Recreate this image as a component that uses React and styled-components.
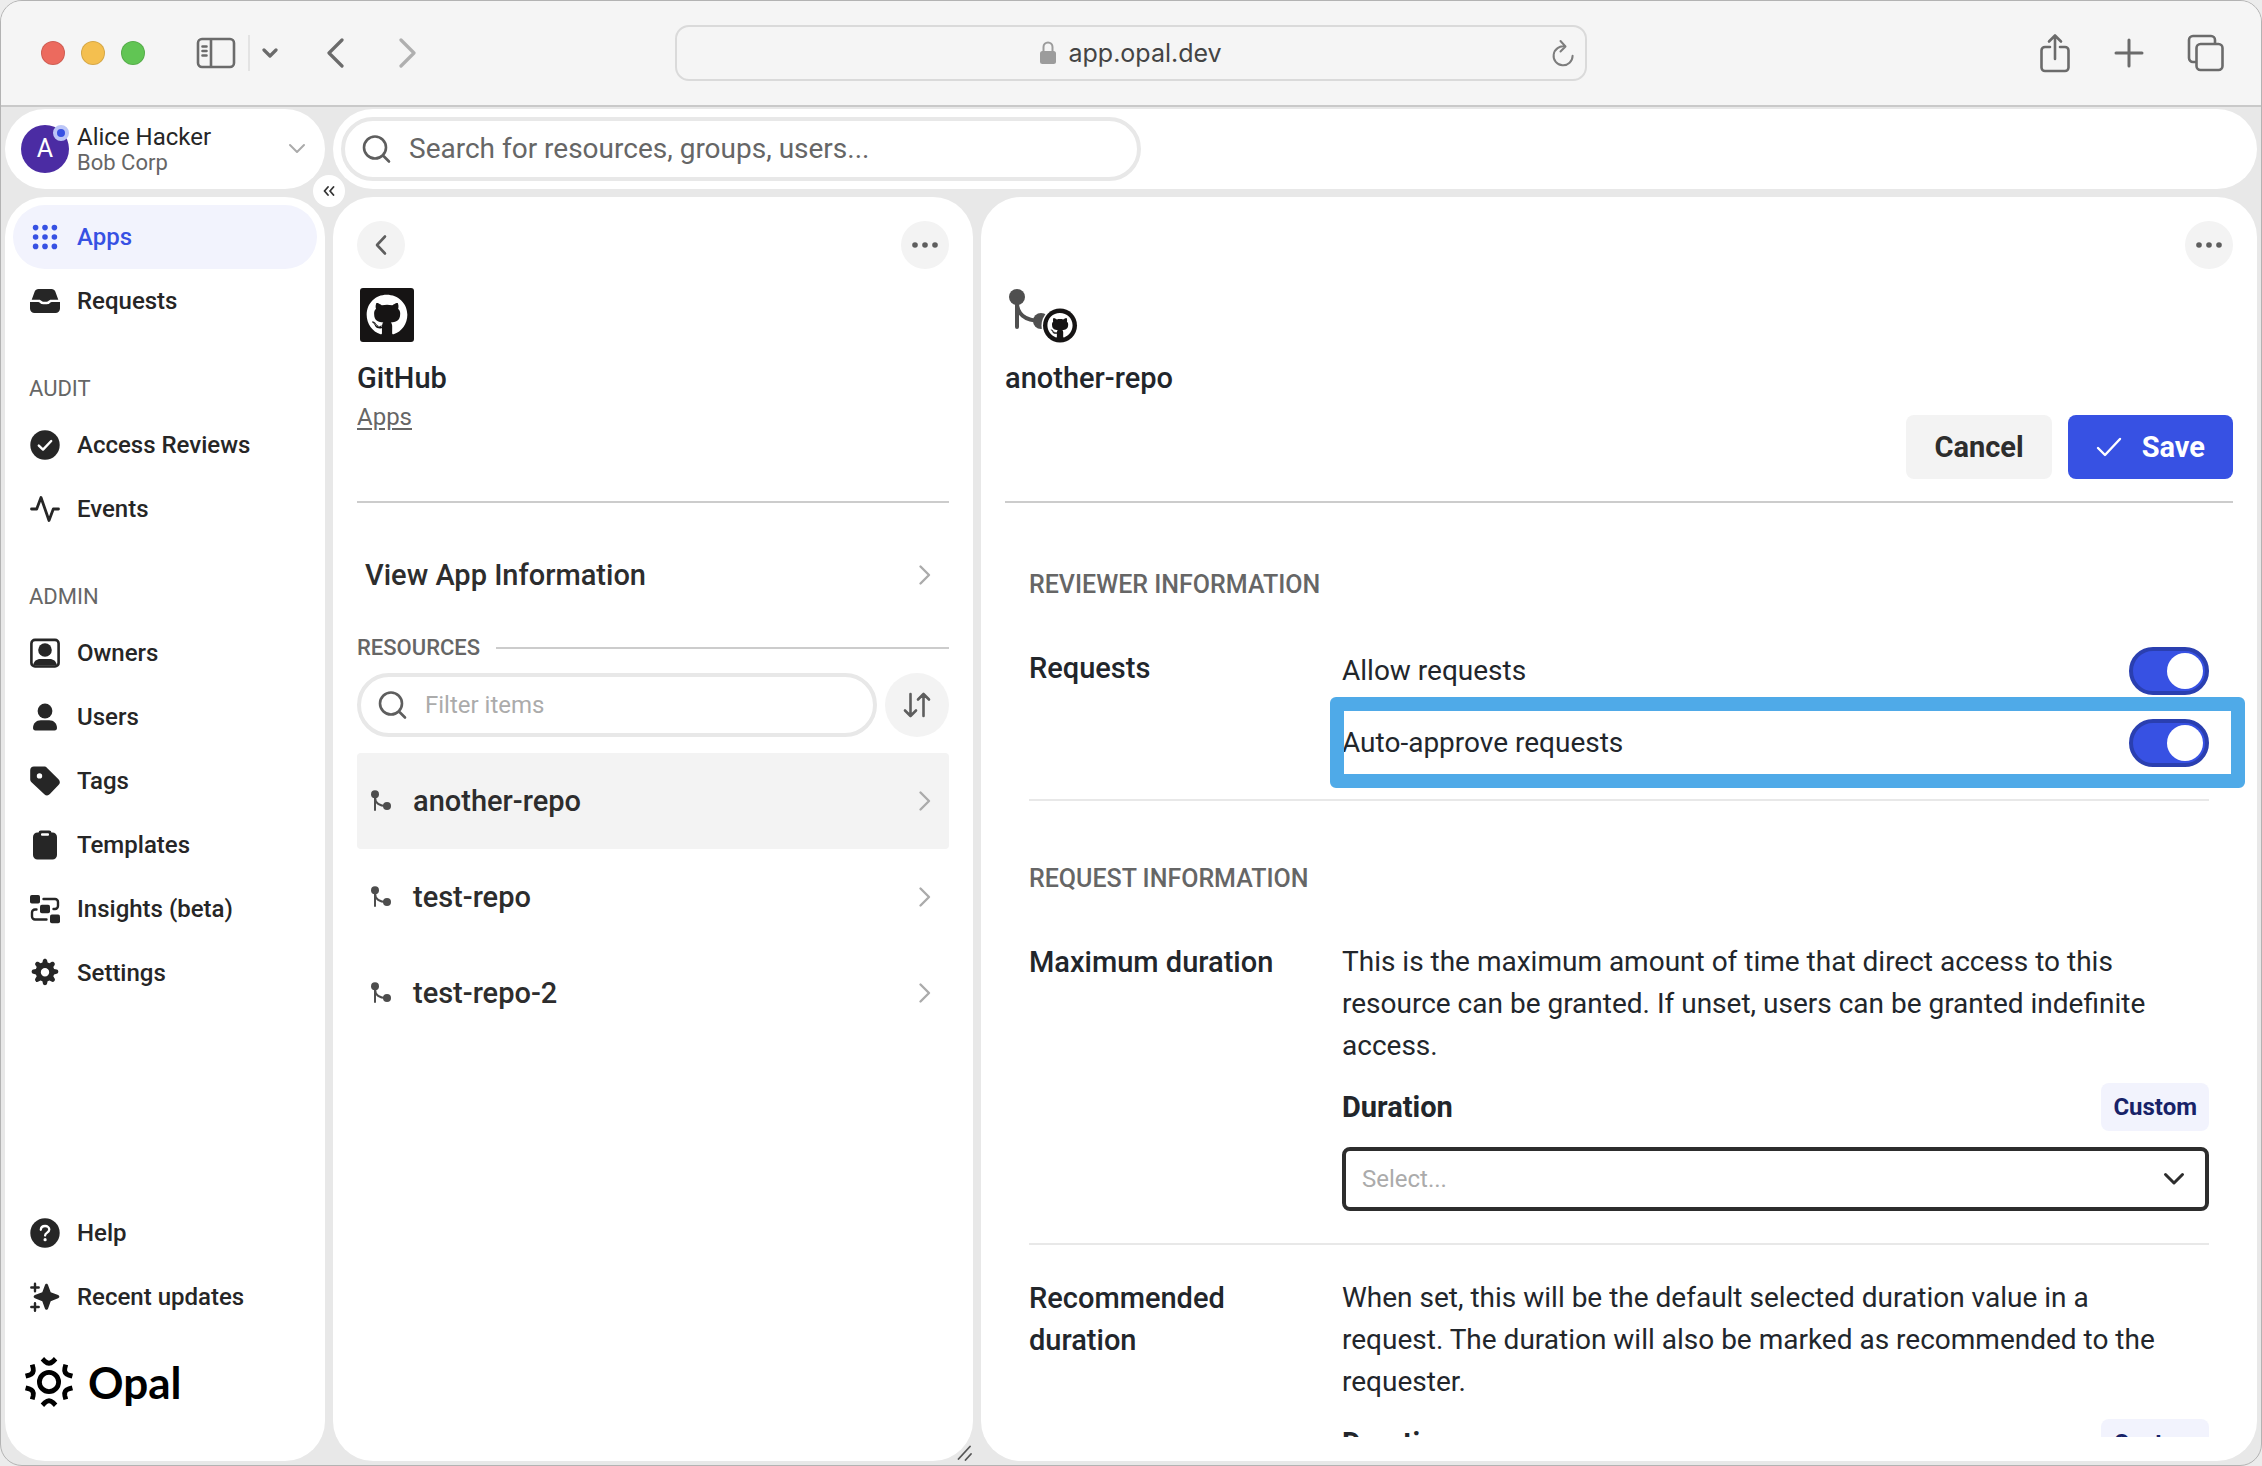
import React from 'react';
import styled, { createGlobalStyle, css } from 'styled-components';
import { FaGithub } from 'react-icons/fa';

const NAV_TOP = [
  { label: 'Apps', icon: 'apps', active: true },
  { label: 'Requests', icon: 'inbox' },
];

const NAV_AUDIT = [
  { label: 'Access Reviews', icon: 'check' },
  { label: 'Events', icon: 'pulse' },
];

const NAV_ADMIN = [
  { label: 'Owners', icon: 'owner' },
  { label: 'Users', icon: 'user' },
  { label: 'Tags', icon: 'tag' },
  { label: 'Templates', icon: 'clipboard' },
  { label: 'Insights (beta)', icon: 'insights' },
  { label: 'Settings', icon: 'gear' },
];

const NAV_BOTTOM = [
  { label: 'Help', icon: 'help' },
  { label: 'Recent updates', icon: 'sparkle' },
];

const REPOS = ['another-repo', 'test-repo', 'test-repo-2'];

const navIcons = {
  apps: [5.6, 15, 24.4].map((y) =>
    [5.6, 15, 24.4].map((x) => <circle key={`${x}-${y}`} cx={x} cy={y} r="2.8" />)
  ),
  inbox: (
    <>
      <path d="M8.5 3h13c1.8 0 3.2 1 3.8 2.6l3 8.2H21c-1.2 0-1.8.6-2.6 1.3-.5.5-1 .7-1.7.7h-3.400c-.7 0-1.200-.2-1.700-.7-.8-.7-1.400-1.300-2.600-1.300H1.700l3-8.200C5.300 4 6.700 3 8.500 3z" />
      <path d="M0 16h8.200c.8 0 1.200.4 1.900 1 .8.8 1.600 1.200 2.800 1.200h4.200c1.200 0 2-.4 2.800-1.200.7-.6 1.100-1 1.900-1H30v6.500a4.500 4.500 0 0 1-4.500 4.500h-21A4.500 4.500 0 0 1 0 22.500z" />
    </>
  ),
  check: (
    <>
      <circle cx="15" cy="15" r="14.7" />
      <path d="M8.800 15.600l4.200 4 8.200-8.600" fill="none" stroke="#fff" strokeWidth="2.4" strokeLinecap="round" strokeLinejoin="round" />
    </>
  ),
  pulse: (
    <path d="M1.500 15h5.200L11 3.500l8 23L23.300 15h5.200" fill="none" stroke="currentColor" strokeWidth="2.8" strokeLinecap="round" strokeLinejoin="round" />
  ),
  owner: (
    <>
      <rect x="1.4" y="1.9" width="27.2" height="26.6" rx="3.6" fill="none" stroke="currentColor" strokeWidth="2.6" />
      <circle cx="15" cy="12" r="6.8" />
      <path d="M3 27.500c.8-4.400 3.600-6.500 7.400-6.500h9.200c3.800 0 6.600 2.100 7.400 6.500z" />
    </>
  ),
  user: (
    <>
      <circle cx="15" cy="9" r="7.4" />
      <path d="M3 26c0-4.600 3.200-7.800 7.800-7.800h8.400c4.600 0 7.800 3.200 7.800 7.800 0 1.400-.9 2.400-2.400 2.400H5.400C3.900 28.400 3 27.400 3 26z" />
    </>
  ),
  tag: (
    <path
      fillRule="evenodd"
      d="M4 .6h10c1.300 0 2.200.4 3.100 1.300l11.400 11.400c1.800 1.800 1.800 4 0 5.800l-8.600 9c-1.700 1.700-3.900 1.700-5.600.1L1.500 16.300C.5 15.300.2 14.400.2 13.200V4.400C.2 2 1.600.6 4 .6zM9.500 7.200a2.700 2.700 0 1 0 0 5.400 2.700 2.700 0 0 0 0-5.400z"
    />
  ),
  clipboard: (
    <>
      <path d="M7.500 2.500h15A4.500 4.500 0 0 1 27 7v18a4.500 4.500 0 0 1-4.500 4.500h-15A4.500 4.500 0 0 1 3 25V7a4.500 4.500 0 0 1 4.500-4.500z" />
      <rect x="8.5" y=".5" width="13" height="7" rx="2.4" />
      <rect x="11" y="3.200" width="8" height="2.600" rx="1" fill="#fff" />
    </>
  ),
  insights: (
    <>
      <rect x="0" y="1" width="10" height="8.6" rx="1.8" />
      <rect x="10" y="10.7" width="10" height="8.6" rx="1.8" />
      <rect x="20" y="20.6" width="10" height="8.6" rx="1.8" />
      <path d="M13.500 5H25a3 3 0 0 1 3 3v4a3 3 0 0 1-3 3h-1.500M6.500 15.500H5a3 3 0 0 0-3 3v4a3 3 0 0 0 3 3h11.500" fill="none" stroke="currentColor" strokeWidth="2.4" strokeLinecap="round" />
    </>
  ),
  gear: (
    <path
      fillRule="evenodd"
      d="M12.900 2.300c.4-2.200 3.800-2.200 4.200 0l.5 2.200 1.900.8 1.900-1.200c1.900-1.300 4.400 1.200 3.100 3.100l-1.200 1.900.8 1.900 2.600.6c2.200.4 2.200 3.800 0 4.200l-2.600.6-.8 1.900 1.300 2.200c1.300 1.900-1.200 4.400-3.100 3.100l-2-1.200-1.900.8-.5 2.400c-.4 2.200-3.800 2.200-4.200 0l-.5-2.400-1.900-.8-2 1.200c-1.900 1.300-4.400-1.200-3.100-3.100l1.300-2.200-.8-1.900-2.600-.6c-2.200-.4-2.200-3.800 0-4.200l2.600-.6.8-1.900-1.200-1.900c-1.300-1.900 1.200-4.400 3.100-3.100l1.900 1.200 1.900-.8zM15 10a4.200 4.200 0 1 0 0 8.400 4.200 4.200 0 0 0 0-8.400z"
    />
  ),
  help: (
    <>
      <circle cx="15" cy="15" r="14.7" />
      <path d="M10.800 11.800c.1-2.300 1.900-3.800 4.300-3.800s4.200 1.500 4.200 3.600c0 3-4.200 3-4.200 5.900" fill="none" stroke="#fff" strokeWidth="2.3" strokeLinecap="round" />
      <circle cx="15.1" cy="21.7" r="1.6" fill="#fff" />
    </>
  ),
  sparkle: (
    <>
      <path d="M16.500 1.800c.9 0 1.300.6 1.600 1.400l2.600 7 7.400 2.900c1.700.7 1.700 2.600 0 3.200l-7.400 2.900-2.600 7.200c-.6 1.800-2.600 1.800-3.200 0l-2.600-7.200-7.400-2.900c-1.700-.6-1.700-2.500 0-3.200l7.400-2.900 2.600-7c.3-.8.800-1.400 1.600-1.400z" />
      <path d="M5 1.800v7.400M1.300 5.500h7.400M5 21.300v7.400M1.300 25h7.400" fill="none" stroke="currentColor" strokeWidth="2.4" strokeLinecap="round" />
    </>
  ),
};

const NavIcon = ({ name }) => (
  <svg width="30" height="30" viewBox="0 0 30 30" fill="currentColor" aria-hidden="true">
    {navIcons[name]}
  </svg>
);

const Line = ({ d, w, h, stroke = 3, color = 'currentColor' }) => (
  <svg
    width={w}
    height={h}
    viewBox={`0 0 ${w} ${h}`}
    fill="none"
    stroke={color}
    strokeWidth={stroke}
    strokeLinecap="round"
    strokeLinejoin="round"
    aria-hidden="true"
  >
    <path d={d} />
  </svg>
);

const SearchIcon = () => (
  <Line w={30} h={30} stroke={2.6} d="M13 2.500a11 11 0 1 0 0 22 11 11 0 0 0 0-22zM21 21.500l6 6" />
);

const ChevronRight = () => <Line w={14} h={22} stroke={2.4} color="#ababab" d="M2.500 2.500l8.500 8.500-8.500 8.500" />;

const Dots = () => (
  <svg width="26" height="6" viewBox="0 0 26 6" fill="currentColor" aria-hidden="true">
    <circle cx="3" cy="3" r="2.8" />
    <circle cx="13" cy="3" r="2.8" />
    <circle cx="23" cy="3" r="2.8" />
  </svg>
);

const BranchIcon = () => (
  <svg width="20" height="22" viewBox="0 0 20 22" aria-hidden="true">
    <circle cx="4" cy="4.2" r="4" fill="#4d4d4d" />
    <circle cx="16" cy="16" r="4" fill="#4d4d4d" />
    <path d="M4 5v15M4 7c0 6 4 9 12 9" fill="none" stroke="#4d4d4d" strokeWidth="2" strokeLinecap="round" />
  </svg>
);

const RepoLogo = () => (
  <svg width="76" height="60" viewBox="0 0 76 60" aria-hidden="true">
    <circle cx="12" cy="12" r="8" fill="#4f4f4f" />
    <circle cx="36" cy="36" r="8" fill="#4f4f4f" />
    <path d="M12 14v28M12 18c0 10 7 18 24 18" fill="none" stroke="#4f4f4f" strokeWidth="4" strokeLinecap="round" />
    <circle cx="55" cy="40.5" r="18.5" fill="#fff" />
    <circle cx="55" cy="40.5" r="17" fill="#161414" />
    <FaGithub x="42" y="27.5" size={26} color="#fff" />
  </svg>
);

const OpalMark = () => (
  <svg width="50" height="52" viewBox="-25 -26 50 52" fill="none" stroke="#000" strokeWidth="4.8" aria-hidden="true">
    <circle r="9.6" />
    {[0, 60, 120, 180, 240, 300].map((a) => (
      <path key={a} d="M-6.600-23.200l2.600 2.600q4 3.600 8 0l2.600-2.600" transform={`rotate(${a})`} />
    ))}
  </svg>
);

const NavList = ({ items }) => (
  <List>
    {items.map((item) => (
      <li key={item.label}>
        <NavLink href="#" $active={item.active}>
          <NavIcon name={item.icon} />
          {item.label}
        </NavLink>
      </li>
    ))}
  </List>
);

const DurationField = ({ id }) => (
  <Field>
    <FieldHead>
      <FieldLabel htmlFor={id}>Duration</FieldLabel>
      <CustomButton type="button">Custom</CustomButton>
    </FieldHead>
    <SelectWrap>
      <Select id={id} defaultValue="">
        <option value="">Select...</option>
      </Select>
      <SelectArrow>
        <Line w={22} h={14} d="M2.500 2.500l8.500 8.500 8.500-8.500" />
      </SelectArrow>
    </SelectWrap>
  </Field>
);

const App = () => {
  return (
    <>
      <GlobalStyle />
      <Window>
        <TitleBar>
          <TitleSide>
            <Lights>
              <Light $color="#ec6a5e" />
              <Light $color="#f4bf4f" />
              <Light $color="#61c554" />
            </Lights>
            <SidebarTools>
              <BarButton aria-label="Toggle sidebar">
                <Line w={40} h={32} d="M6 2h28a4 4 0 0 1 4 4v20a4 4 0 0 1-4 4H6a4 4 0 0 1-4-4V6a4 4 0 0 1 4-4zM15 2v28M6.500 9.500h4M6.500 14h4M6.500 18.500h4" stroke={2.6} />
              </BarButton>
              <BarSeparator />
              <BarButton aria-label="Sidebar menu">
                <Line w={16} h={12} d="M2 3l6 6 6-6" stroke={3.2} />
              </BarButton>
            </SidebarTools>
            <History>
              <BarButton aria-label="Back">
                <Line w={18} h={30} d="M16 2L3 15l13 13" stroke={3.2} />
              </BarButton>
              <BarButton aria-label="Forward" $faded>
                <Line w={18} h={30} d="M2 2l13 13L2 28" stroke={3.2} />
              </BarButton>
            </History>
          </TitleSide>
          <AddressBar>
            <svg width="16" height="24" viewBox="0 0 16 24" aria-hidden="true">
              <rect x="0" y="10" width="16" height="13" rx="2.5" fill="#9c9c9c" />
              <path d="M3.500 11V6a4.500 4.500 0 0 1 9 0v5" fill="none" stroke="#9c9c9c" strokeWidth="2" />
            </svg>
            <Address aria-label="Address" defaultValue="app.opal.dev" />
            <Reload aria-label="Reload">
              <Line w={24} h={28} stroke={2} color="#7d7d7d" d="M14 7.500a9.500 9.500 0 1 0 7.600 9.300M9.500 2l5 5.500-5 5" />
            </Reload>
          </AddressBar>
          <TitleSide $end>
            <BarButton aria-label="Share">
              <Line w={32} h={40} stroke={2.6} d="M11 14H6a3.500 3.500 0 0 0-3.500 3.500v17A3.500 3.500 0 0 0 6 38h20a3.500 3.500 0 0 0 3.500-3.500v-17A3.500 3.500 0 0 0 26 14h-5M16 26V2.500M10 8.500l6-6 6 6" />
            </BarButton>
            <BarButton aria-label="New tab">
              <Line w={30} h={30} stroke={3} d="M15 2v26M2 15h26" />
            </BarButton>
            <BarButton aria-label="Show tabs">
              <Line w={38} h={38} stroke={2.6} d="M13.500 10h18a4 4 0 0 1 4 4v18a4 4 0 0 1-4 4h-18a4 4 0 0 1-4-4V14a4 4 0 0 1 4-4zM9 28H6a4 4 0 0 1-4-4V6a4 4 0 0 1 4-4h18a4 4 0 0 1 4 4v3.500" />
            </BarButton>
          </TitleSide>
        </TitleBar>

        <Workspace>
          <SideColumn>
            <UserCard type="button">
              <Avatar>
                A
                <Status />
              </Avatar>
              <UserText>
                <UserName>Alice Hacker</UserName>
                <UserOrg>Bob Corp</UserOrg>
              </UserText>
              <Line w={18} h={12} stroke={2} color="#ababab" d="M2 2l7 7 7-7" />
            </UserCard>
            <CollapseButton aria-label="Collapse sidebar">
              <Line w={12} h={10} stroke={1.8} d="M5 1L1.500 5 5 9M10.500 1L7 5l3.500 4" />
            </CollapseButton>
            <Sidebar>
              <NavList items={NAV_TOP} />
              <NavHeading>AUDIT</NavHeading>
              <NavList items={NAV_AUDIT} />
              <NavHeading>ADMIN</NavHeading>
              <NavList items={NAV_ADMIN} />
              <NavBottom>
                <NavList items={NAV_BOTTOM} />
                <Brand>
                  <OpalMark />
                  Opal
                </Brand>
              </NavBottom>
            </Sidebar>
          </SideColumn>

          <MainColumn>
            <TopBar>
              <SearchBox $wide>
                <SearchIcon />
                <SearchInput aria-label="Search" placeholder="Search for resources, groups, users..." />
              </SearchBox>
            </TopBar>

            <Panels>
              <AppPanel>
                <PanelHeader>
                  <PanelTools>
                    <RoundButton aria-label="Back">
                      <Line w={14} h={22} stroke={2.6} d="M11 2.500L3 11l8 8.500" />
                    </RoundButton>
                    <RoundButton aria-label="More">
                      <Dots />
                    </RoundButton>
                  </PanelTools>
                  <LogoSlot $inset>
                    <GithubTile>
                      <FaGithub size={42} />
                    </GithubTile>
                  </LogoSlot>
                  <PanelTitle>GitHub</PanelTitle>
                  <CrumbLink href="#">Apps</CrumbLink>
                </PanelHeader>
                <AppBody>
                  <InfoLink href="#">
                    View App Information
                    <ChevronRight />
                  </InfoLink>
                  <ResourcesHeading>RESOURCES</ResourcesHeading>
                  <FilterRow>
                    <SearchBox>
                      <SearchIcon />
                      <SearchInput $small aria-label="Filter items" placeholder="Filter items" />
                    </SearchBox>
                    <RoundButton $large aria-label="Sort">
                      <Line w={28} h={26} stroke={2.6} d="M7.500 2v22M2 18.500l5.500 5.500 5.500-5.500M20.500 24V2M15 7.500L20.500 2 26 7.500" />
                    </RoundButton>
                  </FilterRow>
                  <List>
                    {REPOS.map((repo, i) => (
                      <li key={repo}>
                        <RepoLink href="#" $selected={i === 0}>
                          <BranchIcon />
                          <RepoName>{repo}</RepoName>
                          <ChevronRight />
                        </RepoLink>
                      </li>
                    ))}
                  </List>
                </AppBody>
                <ResizeHandle>
                  <Line w={16} h={16} stroke={1.8} color="#555" d="M1.500 14L13 1.500M8.500 15l5.500-6" />
                </ResizeHandle>
              </AppPanel>

              <DetailPanel>
                <PanelHeader>
                  <PanelTools $end>
                    <RoundButton aria-label="More">
                      <Dots />
                    </RoundButton>
                  </PanelTools>
                  <LogoSlot>
                    <RepoLogo />
                  </LogoSlot>
                  <PanelTitle>another-repo</PanelTitle>
                  <Actions>
                    <ActionButton type="button">Cancel</ActionButton>
                    <ActionButton type="button" $primary>
                      <Line w={26} h={20} stroke={2.4} d="M2 11l7 7L24 2" />
                      Save
                    </ActionButton>
                  </Actions>
                </PanelHeader>

                <DetailBody>
                  <SectionTitle>REVIEWER INFORMATION</SectionTitle>
                  <Setting>
                    <SettingName>Requests</SettingName>
                    <ToggleList>
                      <ToggleRow>
                        Allow requests
                        <Toggle type="checkbox" defaultChecked />
                      </ToggleRow>
                      <ToggleRow $highlight>
                        Auto-approve requests
                        <Toggle type="checkbox" defaultChecked />
                      </ToggleRow>
                    </ToggleList>
                  </Setting>

                  <SectionTitle>REQUEST INFORMATION</SectionTitle>
                  <Setting>
                    <SettingName>Maximum duration</SettingName>
                    <div>
                      <Description>
                        This is the maximum amount of time that direct access to this resource can be granted. If unset, users can be granted indefinite access.
                      </Description>
                      <DurationField id="max-duration" />
                    </div>
                  </Setting>
                  <Setting $next>
                    <SettingName>Recommended duration</SettingName>
                    <div>
                      <Description>
                        When set, this will be the default selected duration value in a request. The duration will also be marked as recommended to the requester.
                      </Description>
                      <DurationField id="recommended-duration" />
                    </div>
                  </Setting>
                </DetailBody>
              </DetailPanel>
            </Panels>
          </MainColumn>
        </Workspace>
      </Window>
    </>
  );
};

export default App;

// Styled components
const GlobalStyle = createGlobalStyle`
  * {
    box-sizing: border-box;
  }

  body {
    margin: 0;
    background: #ececec;
    color: #22262b;
    font-family: Roboto, "Noto Sans", sans-serif;
    font-size: 28px;
    line-height: 42px;
  }

  button,
  input,
  select {
    font: inherit;
    color: inherit;
  }

  button {
    display: flex;
    align-items: center;
    justify-content: center;
    padding: 0;
    border: none;
    background: none;
    cursor: pointer;
  }

  svg {
    display: block;
    flex-shrink: 0;
  }
`;

const Window = styled.div`
  display: flex;
  flex-direction: column;
  height: 100vh;
  overflow: hidden;
  border: 1px solid #b3b3b3;
  border-radius: 22px;
  background: #e8e8e8;
`;

const TitleBar = styled.header`
  display: grid;
  grid-template-columns: 1fr minmax(0, 912px) 1fr;
  align-items: center;
  flex-shrink: 0;
  height: 106px;
  padding: 0 36px;
  border-bottom: 2px solid #c9c9c9;
  background: #f5f5f5;
  color: #6b6b6b;
`;

const TitleSide = styled.div`
  display: flex;
  align-items: center;
  gap: ${(p) => (p.$end ? '43px' : '0')};
  justify-content: ${(p) => (p.$end ? 'flex-end' : 'flex-start')};
`;

const Lights = styled.div`
  display: flex;
  gap: 16px;
  margin-left: 4px;
`;

const Light = styled.span`
  width: 24px;
  height: 24px;
  border: 1px solid rgba(0, 0, 0, 0.12);
  border-radius: 50%;
  background: ${(p) => p.$color};
`;

const SidebarTools = styled.div`
  display: flex;
  align-items: center;
  gap: 12px;
  margin-left: 51px;
`;

const BarButton = styled.button`
  opacity: ${(p) => (p.$faded ? 0.5 : 1)};
`;

const BarSeparator = styled.span`
  width: 2px;
  height: 36px;
  background: #e3e3e3;
`;

const History = styled.div`
  display: flex;
  gap: 55px;
  margin-left: 48px;
`;

const AddressBar = styled.div`
  position: relative;
  display: flex;
  align-items: center;
  justify-content: center;
  gap: 13px;
  height: 56px;
  border: 2px solid #dadada;
  border-radius: 14px;
`;

const Address = styled.input`
  width: 154px;
  padding: 0;
  border: none;
  outline: none;
  background: none;
  color: #444;
  font-family: Inter, sans-serif;
  font-size: 25px;
`;

const Reload = styled.button`
  position: absolute;
  right: 10px;
`;

const Workspace = styled.div`
  display: flex;
  gap: 8px;
  flex: 1;
  min-height: 0;
  padding: 2px 4px 4px;
`;

const SideColumn = styled.div`
  position: relative;
  display: flex;
  flex-direction: column;
  gap: 8px;
  width: 320px;
  flex-shrink: 0;
`;

const card = css`
  border-radius: 40px;
  background: #fff;
`;

const UserCard = styled.button`
  ${card}
  justify-content: flex-start;
  gap: 8px;
  height: 80px;
  padding: 0 19px 0 16px;
  text-align: left;
`;

const Avatar = styled.span`
  position: relative;
  display: flex;
  align-items: center;
  justify-content: center;
  width: 48px;
  height: 48px;
  border-radius: 50%;
  background: #4b2ca3;
  color: #fff;
  font-size: 25px;
`;

const Status = styled.span`
  position: absolute;
  top: 0;
  right: 0;
  width: 16px;
  height: 16px;
  border: 4px solid #bcc6f7;
  border-radius: 50%;
  background: #3751e3;
`;

const UserText = styled.span`
  display: flex;
  flex: 1;
  flex-direction: column;
  padding-top: 2px;
  line-height: 26px;
`;

const UserName = styled.span`
  color: #262626;
  font-size: 24px;
`;

const UserOrg = styled.span`
  color: #666;
  font-size: 22px;
`;

const CollapseButton = styled.button`
  position: absolute;
  top: 66px;
  right: -20px;
  z-index: 1;
  width: 32px;
  height: 32px;
  border-radius: 50%;
  background: #fff;
  color: #333;
`;

const Sidebar = styled.nav`
  ${card}
  display: flex;
  flex: 1;
  flex-direction: column;
  min-height: 0;
  padding: 8px;
`;

const List = styled.ul`
  margin: 0;
  padding: 0;
  list-style: none;
`;

const NavLink = styled.a`
  display: flex;
  align-items: center;
  gap: 17px;
  height: 64px;
  padding: 0 17px;
  border-radius: 32px;
  background: ${(p) => (p.$active ? '#f2f3fd' : 'transparent')};
  color: ${(p) => (p.$active ? '#3751e3' : '#262626')};
  font-size: 24px;
  font-weight: 500;
  text-decoration: none;
`;

const NavHeading = styled.h2`
  margin: 32px 0 0;
  padding: 6px 16px;
  color: #666;
  font-size: 22px;
  font-weight: 400;
  line-height: 36px;
`;

const NavBottom = styled.div`
  margin-top: auto;
  padding-bottom: 46px;
`;

const Brand = styled.div`
  display: flex;
  align-items: center;
  gap: 14px;
  height: 78px;
  padding: 28px 0 0 11px;
  color: #000;
  font-family: Lato, sans-serif;
  font-size: 44px;
  font-weight: 700;
`;

const MainColumn = styled.main`
  display: flex;
  flex: 1;
  flex-direction: column;
  gap: 8px;
  min-width: 0;
`;

const TopBar = styled.div`
  ${card}
  display: flex;
  align-items: center;
  height: 80px;
  padding: 8px;
`;

const SearchBox = styled.div`
  display: flex;
  align-items: center;
  gap: 17px;
  flex: ${(p) => (p.$wide ? '0 1 800px' : '1')};
  min-width: 0;
  height: 64px;
  padding: 0 17px;
  border: 4px solid #e8e8e8;
  border-radius: 32px;
  color: #5e5e5e;
`;

const SearchInput = styled.input`
  flex: 1;
  min-width: 0;
  padding: 0;
  border: none;
  outline: none;
  background: none;
  font-size: ${(p) => (p.$small ? '24px' : '28px')};

  &::placeholder {
    color: ${(p) => (p.$small ? '#ababab' : '#666')};
    opacity: 1;
  }
`;

const Panels = styled.div`
  display: flex;
  flex: 1;
  gap: 8px;
  min-height: 0;
`;

const AppPanel = styled.section`
  ${card}
  position: relative;
  flex: 0 1 640px;
  min-width: 0;
`;

const DetailPanel = styled.section`
  ${card}
  display: flex;
  flex: 1;
  flex-direction: column;
  min-width: 0;
  padding-bottom: 24px;
`;

const PanelHeader = styled.header`
  flex-shrink: 0;
  height: 306px;
  margin: 0 24px;
  padding-top: 24px;
  border-bottom: 2px solid #ccc;
`;

const PanelTools = styled.div`
  display: flex;
  justify-content: ${(p) => (p.$end ? 'flex-end' : 'space-between')};
`;

const RoundButton = styled.button`
  width: ${(p) => (p.$large ? '64px' : '48px')};
  height: ${(p) => (p.$large ? '64px' : '48px')};
  border-radius: 50%;
  background: #f3f3f3;
  color: #5e5e5e;
`;

const LogoSlot = styled.div`
  height: 60px;
  margin: 16px 0 12px;
  padding: ${(p) => (p.$inset ? '3px' : '0')};
`;

const GithubTile = styled.div`
  display: flex;
  align-items: center;
  justify-content: center;
  width: 54px;
  height: 54px;
  border-radius: 3px;
  background: #161414;
  color: #fff;
`;

const PanelTitle = styled.h1`
  margin: 0;
  font-size: 29px;
  font-weight: 500;
`;

const CrumbLink = styled.a`
  display: block;
  color: #666;
  font-size: 24px;
  line-height: 36px;
  text-underline-offset: 3px;
`;

const Actions = styled.div`
  display: flex;
  justify-content: flex-end;
  gap: 16px;
  margin-top: 16px;
`;

const ActionButton = styled.button`
  gap: 20px;
  height: 64px;
  padding: 0 28px;
  border-radius: 8px;
  background: ${(p) => (p.$primary ? '#3751e3' : '#f3f3f3')};
  color: ${(p) => (p.$primary ? '#fff' : '#2d2d2d')};
  font-size: 29px;
  font-weight: 700;
`;

const AppBody = styled.div`
  padding: 24px 24px 0;
`;

const InfoLink = styled.a`
  display: flex;
  align-items: center;
  justify-content: space-between;
  height: 96px;
  padding: 0 17px 0 8px;
  color: #2d2d2d;
  font-size: 29px;
  font-weight: 500;
  text-decoration: none;
`;

const ResourcesHeading = styled.h2`
  display: flex;
  align-items: center;
  gap: 16px;
  margin: 8px 0;
  color: #666;
  font-size: 22px;
  font-weight: 500;
  line-height: 34px;

  &::after {
    content: "";
    flex: 1;
    height: 2px;
    background: #ccc;
  }
`;

const FilterRow = styled.div`
  display: flex;
  gap: 8px;
  margin-bottom: 16px;
`;

const RepoLink = styled.a`
  display: flex;
  align-items: center;
  gap: 22px;
  height: 96px;
  padding: 0 17px 0 14px;
  border-radius: 4px;
  background: ${(p) => (p.$selected ? '#f3f3f3' : 'transparent')};
  color: #2d2d2d;
  font-size: 29px;
  font-weight: 500;
  text-decoration: none;
`;

const RepoName = styled.span`
  flex: 1;
`;

const ResizeHandle = styled.span`
  position: absolute;
  right: 0;
  bottom: 0;
`;

const DetailBody = styled.div`
  flex: 1;
  min-height: 0;
  padding: 4px 48px 0;
  overflow: hidden;
`;

const SectionTitle = styled.h2`
  margin: 60px 0 44px;
  color: #666;
  font-size: 25px;
  font-weight: 500;
  line-height: 36px;
`;

const Setting = styled.section`
  display: grid;
  grid-template-columns: 273px minmax(0, 1fr);
  gap: 40px;
  padding: ${(p) => (p.$next ? '32px 0' : '0 0 32px')};
  border-bottom: 2px solid #e8e8e8;
`;

const SettingName = styled.h3`
  margin: 0;
  font-size: 29px;
  font-weight: 500;
`;

const ToggleList = styled.div`
  display: flex;
  flex-direction: column;
  gap: 24px;
`;

const ToggleRow = styled.label`
  position: relative;
  display: flex;
  align-items: center;
  justify-content: space-between;
  height: 48px;

  ${(p) =>
    p.$highlight &&
    css`
      &::after {
        content: "";
        position: absolute;
        inset: -22px -36px -21px -12px;
        border: 14px solid #4faae8;
        border-radius: 6px;
        pointer-events: none;
      }
    `}
`;

const Toggle = styled.input`
  appearance: none;
  width: 80px;
  height: 48px;
  margin: 0;
  padding: 2px;
  border: 4px solid #2a3fb0;
  border-radius: 24px;
  background: #3751e3;
  cursor: pointer;

  &::before {
    content: "";
    display: block;
    width: 36px;
    height: 36px;
    margin-left: auto;
    border-radius: 50%;
    background: #fff;
  }
`;

const Description = styled.p`
  margin: 0;
  padding-right: 24px;
`;

const Field = styled.div`
  margin-top: 16px;
`;

const FieldHead = styled.div`
  display: flex;
  align-items: center;
  justify-content: space-between;
  margin-bottom: 16px;
`;

const FieldLabel = styled.label`
  font-size: 29px;
  font-weight: 700;
`;

const CustomButton = styled.button`
  height: 48px;
  padding: 0 12px;
  border-radius: 8px;
  background: #f2f3fd;
  color: #182268;
  font-size: 24px;
  font-weight: 700;
`;

const SelectWrap = styled.div`
  position: relative;
`;

const Select = styled.select`
  display: block;
  appearance: none;
  width: 100%;
  height: 64px;
  padding: 0 16px;
  border: 4px solid #2d2d2d;
  border-radius: 8px;
  background: #fff;
  color: #ababab;
  font-size: 24px;
`;

const SelectArrow = styled.span`
  position: absolute;
  top: 25px;
  right: 24px;
  color: #2d2d2d;
  pointer-events: none;
`;
